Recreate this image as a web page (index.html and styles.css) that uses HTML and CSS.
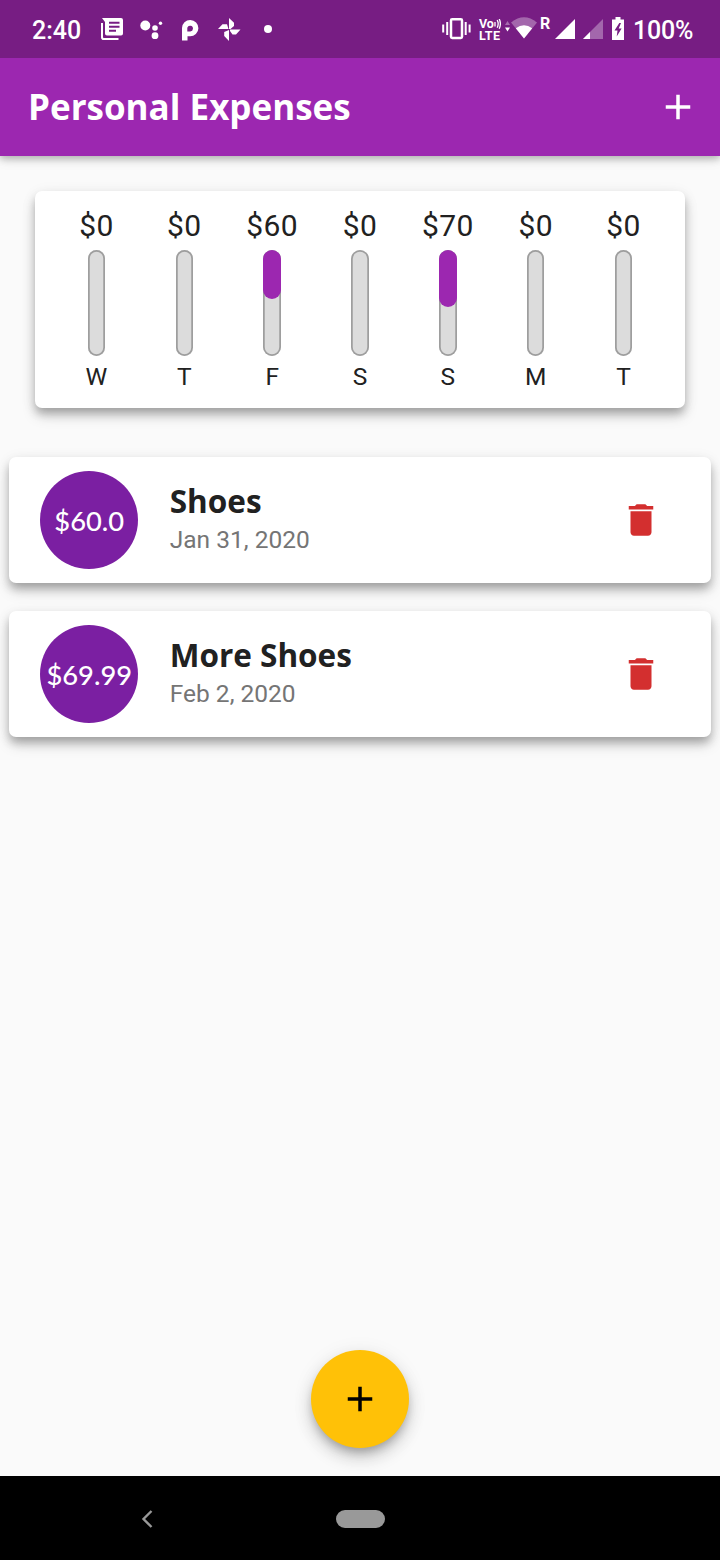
FILE: index.html
```html
<!DOCTYPE html>
<html lang="en">
<head>
<meta charset="utf-8">
<title>Personal Expenses</title>
<link rel="stylesheet" href="styles.css">
</head>
<body>
<div class="screen">
  <header class="status">
    <span class="clock">2:40</span>
    <svg class="i-news" width="22" height="22" viewBox="0 0 22 22"><path d="M1 5v14.200q0 1.800 1.800 1.800H17.500" fill="none" stroke="#fff" stroke-width="2"/><path fill="#fff" fill-rule="evenodd" d="M1 0h19q2 0 2 2v13.500q0 2-2 2H6q-2 0-2-2V4zM8 3.800v2h10.500v-2zM8 7.800v2h10.500v-2zM8 11.800v2h7v-2z"/></svg>
    <svg class="i-assist" width="23" height="20" viewBox="0 0 23 20" fill="#fff"><circle cx="5.300" cy="5.500" r="5"/><circle cx="15" cy="8" r="2.800"/><circle cx="15" cy="15.700" r="3.400"/><circle cx="20.500" cy="3.300" r="1.700"/></svg>
    <svg class="i-p" width="18" height="22" viewBox="0 0 18 22"><path fill="#fff" fill-rule="evenodd" d="M1 21.500V9A8.200 8.200 0 1 1 9 17.300H6.500v4.200zM6.300 12.500V8.800a2.900 2.900 0 1 1 2.900 3.700z"/></svg>
    <svg class="i-pin" width="23" height="23" viewBox="0 0 23 23" fill="#fff"><path d="M11 11V0l5 4.800V8L12.500 11zM12 11.500h10.500L18 16.500h-3.500L12 13zM11 12v11l-4.800-5v-4zM10.500 11H0l4.500-4.700H9z"/></svg>
    <svg class="i-dot" width="8" height="8" viewBox="0 0 8 8"><circle cx="4" cy="4" r="4" fill="#fff"/></svg>
    <svg class="i-vib" width="29" height="22" viewBox="0 0 29 22" fill="none" stroke="#fff"><rect x="9" y="1.300" width="11" height="18.600" rx="1.200" stroke-width="2.500"/><path d="M1.200 6.500v8M5.200 4v13M23.700 4v13M27.600 6.500v8" stroke-width="2"/></svg>
    <span class="volte"><span>Vo<svg width="7" height="10" viewBox="0 0 7 10" fill="none" stroke="#fff" stroke-width="1.300"><path d="M1 3v4.500M3.200 1q2 3.700 0 7.800M5.200 0q2.400 4.700 0 9.800"/></svg></span><span>LTE</span></span>
    <svg class="i-data" width="5" height="11" viewBox="0 0 5 11" fill="#fff"><path d="M0 4 2.500 0 5 4z" opacity=".35"/><path d="M0 6.500h5L2.500 10.500z"/></svg>
    <svg class="i-wifi" width="26" height="22" viewBox="0 0 26 22" fill="#fff"><path d="M0 5.500Q13-5 26 5.500L13 21.500z" opacity=".33"/><path d="M4.800 11.300q8.200-6 16.400 0L13 21.500z"/></svg>
    <span class="roam">R</span>
    <svg class="i-sig" width="20" height="20" viewBox="0 0 20 20"><path d="M0 20 20 0v20z" fill="#fff"/></svg>
    <svg class="i-sig2" width="20" height="20" viewBox="0 0 20 20" fill="#fff"><path d="M0 20 20 0v20z" opacity=".33"/><path d="M0 20 7 13v7z"/></svg>
    <svg class="i-bat" width="12" height="23" viewBox="0 0 12 23"><path d="M3.500 0h5v2.500H12V23H0V2.500h3.500z" fill="#fff"/><path d="M7.300 6 2.500 13.500h3L4.700 19.500 9.600 11.500H6.700L9 6z" fill="#771d83"/></svg>
    <span class="pct">100%</span>
  </header>
  <div class="appbar">
    <h1>Personal Expenses</h1>
    <svg class="icon" viewBox="0 0 24 24"><path fill="#fff" d="M19 13h-6v6h-2v-6H5v-2h6V5h2v6h6v2z"/></svg>
  </div>
  <main>
    <section class="card chart">
      <div class="day"><span class="sum">$0</span><div class="bar"></div><span class="name">W</span></div>
      <div class="day"><span class="sum">$0</span><div class="bar"></div><span class="name">T</span></div>
      <div class="day"><span class="sum">$60</span><div class="bar"><div class="fill" style="height:46.15%"></div></div><span class="name">F</span></div>
      <div class="day"><span class="sum">$0</span><div class="bar"></div><span class="name">S</span></div>
      <div class="day"><span class="sum">$70</span><div class="bar"><div class="fill" style="height:53.84%"></div></div><span class="name">S</span></div>
      <div class="day"><span class="sum">$0</span><div class="bar"></div><span class="name">M</span></div>
      <div class="day"><span class="sum">$0</span><div class="bar"></div><span class="name">T</span></div>
    </section>
    <section class="list">
      <article class="card item">
        <div class="amount">$60.0</div>
        <div class="info"><h2>Shoes</h2><p>Jan 31, 2020</p></div>
        <svg class="icon" viewBox="0 0 24 24"><path fill="#d32f2f" d="M6 19c0 1.100.9 2 2 2h8c1.100 0 2-.9 2-2V7H6v12zM19 4h-3.500l-1-1h-5l-1 1H5v2h14V4z"/></svg>
      </article>
      <article class="card item">
        <div class="amount">$69.99</div>
        <div class="info"><h2>More Shoes</h2><p>Feb 2, 2020</p></div>
        <svg class="icon" viewBox="0 0 24 24"><path fill="#d32f2f" d="M6 19c0 1.100.9 2 2 2h8c1.100 0 2-.9 2-2V7H6v12zM19 4h-3.500l-1-1h-5l-1 1H5v2h14V4z"/></svg>
      </article>
    </section>
    <div class="fab"><svg class="icon" viewBox="0 0 24 24"><path d="M19 13h-6v6h-2v-6H5v-2h6V5h2v6h6v2z"/></svg></div>
  </main>
  <nav class="nav">
    <svg class="back" width="12" height="18" viewBox="0 0 12 18"><path d="M10.500 1 2.500 9l8 8" fill="none" stroke="#999" stroke-width="2.400"/></svg>
    <div class="pill"></div>
  </nav>
</div>
</body>
</html>
```
FILE: styles.css
```css
* { box-sizing: border-box; }
body { margin: 0; font-family: Roboto, sans-serif; }
svg { display: block; flex: none; }
h1, h2, p { margin: 0; }
.screen { width: 720px; height: 1560px; display: flex; flex-direction: column; background: #fafafa; overflow: hidden; }

.status { height: 58px; flex: none; position: relative; z-index: 1; display: flex; align-items: flex-start; background: #771d83; color: #fff; padding-left: 32px; white-space: nowrap; }
.clock, .pct { font-size: 25px; font-weight: 500; line-height: 30px; margin-top: 16px; }
.clock { width: 69px; }
.i-news { margin-top: 18px; }
.i-assist { margin: 20px 0 0 17px; }
.i-p { margin: 19px 0 0 18px; }
.i-pin { margin: 18px 0 0 19px; }
.i-dot { margin: 25px 0 0 23px; }
.i-vib { margin: 18px 0 0 170px; }
.volte { width: 23px; margin: 18px 0 0 8px; font-size: 12.500px; font-weight: 700; line-height: 11px; display: flex; flex-direction: column; gap: 1px; letter-spacing: -.2px; }
.volte span { display: flex; align-items: center; }
.volte span + span { letter-spacing: .4px; }
.i-data { margin: 21px 0 0 3px; }
.i-wifi { margin: 17px 0 0 1px; }
.roam { width: 10px; margin: 14px 0 0 3px; font-size: 16px; line-height: 19px; font-weight: 700; }
.i-sig { margin: 19px 0 0 5px; }
.i-sig2 { margin: 19px 0 0 8px; }
.i-bat { margin: 17px 0 0 9px; }
.pct { margin-left: 9px; letter-spacing: -.2px; }

.appbar { height: 98px; flex: none; position: relative; display: flex; align-items: center; justify-content: space-between; padding: 0 21px 0 28px; background: #9c27b0; color: #fff; box-shadow: 0 3px 7px rgba(0,0,0,.24), 0 1px 14px rgba(0,0,0,.12); }
.appbar h1 { font: 700 35px/48px "Open Sans", sans-serif; }
.icon { width: 42px; height: 42px; }

main { flex: 1; display: flex; flex-direction: column; }
.card { background: #fff; border-radius: 7px; box-shadow: 0 6px 8px -1px rgba(0,0,0,.22), 0 8px 14px rgba(0,0,0,.15), 0 3px 16px rgba(0,0,0,.07); }
.chart { margin: 35px 35px 0; height: 217px; padding: 17px 17.500px; display: flex; color: #212121; }
.day { flex: 1; display: flex; flex-direction: column; align-items: center; }
.sum { height: 35px; font-size: 30px; line-height: 35px; letter-spacing: .4px; }
.bar { width: 17.500px; height: 105.500px; margin: 7px 0; border-radius: 9px; background: #dcdcdc; box-shadow: inset 0 0 0 1.750px #9e9e9e; }
.fill { border-radius: 9px; background: #9c27b0; }
.name { font-size: 24.500px; line-height: 28px; }

.list { margin-top: 49px; padding: 0 8.750px; display: flex; flex-direction: column; gap: 28px; }
.item { height: 126px; display: flex; align-items: center; padding: 0 49px 0 31.500px; }
.amount { width: 98px; height: 98px; border-radius: 50%; flex: none; display: flex; align-items: center; justify-content: center; padding-top: 2px; background: #7b1fa2; color: #fff; font: 500 27.300px/34px Lato, sans-serif; }
.info { flex: 1; margin-left: 31.500px; }
.info h2 { font: 700 31.500px/42px "Open Sans", sans-serif; color: #212121; margin: -6px 0 4px; }
.info p { font-size: 24.500px; line-height: 28px; color: #757575; }
.fab { width: 98px; height: 98px; border-radius: 50%; margin: auto auto 28px; display: flex; align-items: center; justify-content: center; background: #ffc107; box-shadow: 0 6px 9px -2px rgba(0,0,0,.22), 0 10px 17px rgba(0,0,0,.16), 0 3px 22px rgba(0,0,0,.07); }

.nav { height: 84px; flex: none; display: flex; align-items: center; background: #000; padding: 1px 0 0 141px; }
.pill { width: 49px; height: 18px; border-radius: 9px; margin-left: 183px; background: #999; }
```
